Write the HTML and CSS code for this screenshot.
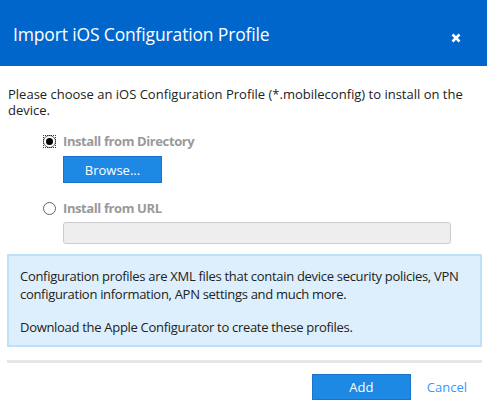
FILE: index.html
```html
<!DOCTYPE html>
<html>
<head>
<meta charset="utf-8">
<link rel="stylesheet" href="styles.css">
</head>
<body>
<div class="dialog">
  <div class="header">
    <div class="title">Import iOS Configuration Profile</div>
    <div class="close">
      <svg width="10" height="10" viewBox="0 0 10 10"><path d="M1.5 1.5 L8.5 8.5 M8.5 1.5 L1.5 8.5" stroke="#fff" stroke-width="2.6" stroke-linecap="butt"/></svg>
    </div>
  </div>
  <div class="content">
    <p class="intro">Please choose an iOS Configuration Profile (*.mobileconfig) to install on the device.</p>
    <div class="options">
      <div class="option">
        <span class="radio checked focused"><span class="dot"></span></span>
        <span class="label">Install from Directory</span>
      </div>
      <div class="indent"><button class="btn">Browse...</button></div>
      <div class="option second">
        <span class="radio"></span>
        <span class="label">Install from URL</span>
      </div>
      <div class="indent url"><div class="input"></div></div>
    </div>
  </div>
  <div class="info">
    <p>Configuration profiles are XML files that contain device security policies, VPN configuration information, APN settings and much more.</p>
    <p class="p2">Download the Apple Configurator to create these profiles.</p>
  </div>
  <div class="sep"></div>
  <div class="footer">
    <button class="btn add">Add</button>
    <span class="cancel">Cancel</span>
  </div>
</div>
</body>
</html>
```

FILE: styles.css
```css
html, body {
  margin: 0;
  padding: 0;
  background: #fff;
}
body {
  font-family: "Open Sans", "Noto Sans", sans-serif;
  font-size: 13px;
  color: #222;
  width: 487px;
  height: 409px;
  overflow: hidden;
}
.header {
  height: 66px;
  background: #0066cc;
  display: flex;
  align-items: center;
  justify-content: space-between;
  padding: 0 26px 0 13px;
  box-sizing: border-box;
}
.title {
  color: #fff;
  font-size: 17.5px;
  letter-spacing: -0.15px;
  margin-top: 2px;
}
.close {
  display: flex;
  margin-top: 10px;
}
.content {
  padding: 20px 8px 0 8px;
}
.intro {
  margin: 0;
  line-height: 16px;
  letter-spacing: 0;
}
.options {
  padding-left: 35px;
  margin-top: 15px;
}
.option {
  display: flex;
  align-items: center;
  height: 16px;
  gap: 7px;
}
.option.second {
  margin-top: 17px;
}
.radio {
  width: 11px;
  height: 11px;
  border: 1px solid #666;
  border-radius: 50%;
  display: flex;
  align-items: center;
  justify-content: center;
  background: #fff;
  position: relative;
  flex: none;
}
.radio.focused::after {
  content: "";
  position: absolute;
  left: -1px;
  top: -1px;
  right: -1px;
  bottom: -1px;
  border: 1px dotted #333;
}
.dot {
  width: 7px;
  height: 7px;
  border-radius: 50%;
  background: #000;
}
.label {
  font-weight: bold;
  color: #999;
  letter-spacing: -0.4px;
}
.indent {
  padding-left: 20px;
  margin-top: 7px;
}
.indent.url {
  margin-top: 6px;
}
.btn {
  width: 99px;
  height: 27px;
  background: #1e88e5;
  border: 1px solid #1a73c8;
  color: #fff;
  font-family: "Open Sans", "Noto Sans", sans-serif;
  font-size: 13px;
  padding: 0;
  display: block;
}
.input {
  width: 386px;
  height: 20px;
  background: #eeeeee;
  border: 1px solid #cccccc;
  border-radius: 3px;
}
.info {
  margin: 10px 5px 0 7px;
  background: #ddeffc;
  border: 2px solid #bfe0f7;
  padding: 11px 11px 9px 11px;
  line-height: 18px;
  letter-spacing: -0.3px;
}
.info p {
  margin: 0;
}
.info .p2 {
  margin-top: 15px;
}
.sep {
  margin: 13px 5px 0 7px;
  height: 3px;
  background: #e6e6e6;
}
.footer {
  display: flex;
  justify-content: flex-end;
  align-items: center;
  padding: 11px 20px 0 0;
  gap: 16px;
}
.add {
  width: 99px;
  height: 26px;
}
.cancel {
  color: #3399ff;
}
```
